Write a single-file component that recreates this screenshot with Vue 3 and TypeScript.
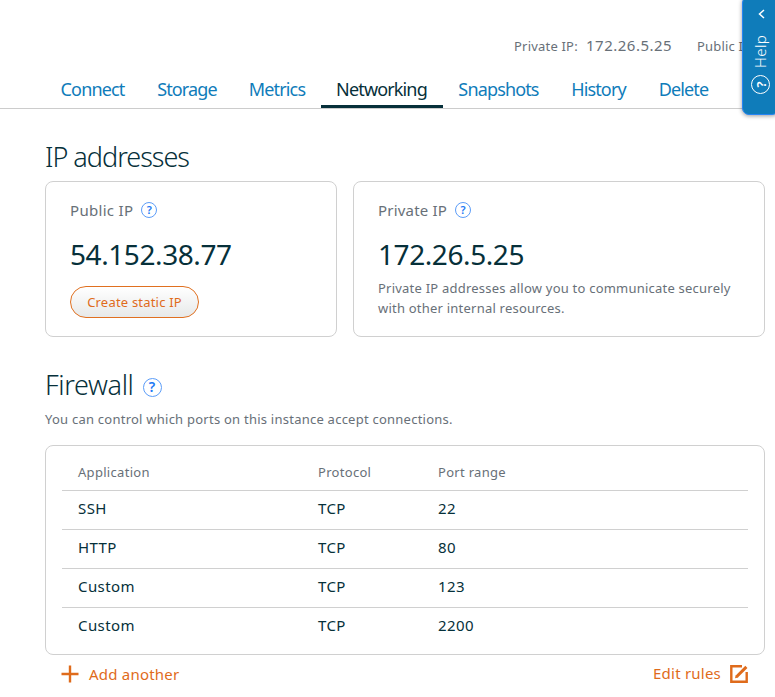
<script setup lang="ts">
interface Tab { id: string; label: string }
interface Rule { application: string; protocol: string; port: string }

const tabs: Tab[] = [
  { id: 'connect', label: 'Connect' },
  { id: 'storage', label: 'Storage' },
  { id: 'metrics', label: 'Metrics' },
  { id: 'networking', label: 'Networking' },
  { id: 'snapshots', label: 'Snapshots' },
  { id: 'history', label: 'History' },
  { id: 'delete', label: 'Delete' },
]
const activeTab = 'networking'

const rules: Rule[] = [
  { application: 'SSH', protocol: 'TCP', port: '22' },
  { application: 'HTTP', protocol: 'TCP', port: '80' },
  { application: 'Custom', protocol: 'TCP', port: '123' },
  { application: 'Custom', protocol: 'TCP', port: '2200' },
]
</script>

<template>
  <div class="page">
    <header class="meta">
      <span class="meta-label">Private IP:</span>
      <span class="meta-value">172.26.5.25</span>
      <span class="meta-label">Public IP:</span>
    </header>

    <nav class="tabs">
      <a v-for="tab in tabs" :key="tab.id" class="tab" :class="{ active: tab.id === activeTab }">
        <span>{{ tab.label }}</span>
      </a>
    </nav>

    <main class="content">
      <h2 class="title ip-title"><span>IP addresses</span></h2>
      <div class="cards">
        <section class="card">
          <div class="card-label public"><span>Public IP</span><i class="help-icon">?</i></div>
          <div class="address">54.152.38.77</div>
          <button class="static-button"><span>Create static IP</span></button>
        </section>
        <section class="card">
          <div class="card-label"><span>Private IP</span><i class="help-icon">?</i></div>
          <div class="address">172.26.5.25</div>
          <p class="note">Private IP addresses allow you to communicate securely<br>with other internal resources.</p>
        </section>
      </div>

      <h2 class="title firewall-title"><span>Firewall</span><i class="help-icon large">?</i></h2>
      <p class="subtitle">You can control which ports on this instance accept connections.</p>

      <div class="rules">
        <div class="row head"><span>Application</span><span>Protocol</span><span>Port range</span></div>
        <div v-for="(rule, index) in rules" :key="index" class="row">
          <span>{{ rule.application }}</span><span>{{ rule.protocol }}</span><span>{{ rule.port }}</span>
        </div>
      </div>

      <div class="actions">
        <a class="action">
          <svg width="18" height="18" viewBox="0 0 18 18"><path d="M9 .5v17M.5 9h17" stroke="currentColor" stroke-width="2.4" fill="none" /></svg>
          <span>Add another</span>
        </a>
        <a class="action edit">
          <span>Edit rules</span>
          <svg width="18" height="18" viewBox="0 0 18 18" fill="none" stroke="currentColor">
            <path d="M12 1.3H1.3v15.4h15.4V7" stroke-width="2.4" />
            <path d="M6.8 11.5L16.4 1.9" stroke-width="3" />
            <path d="M5 13.3l.7-3.4 2.7 2.7z" fill="currentColor" stroke="none" />
          </svg>
        </a>
      </div>
    </main>

    <aside class="help-panel">
      <svg class="chevron" width="7" height="10" viewBox="0 0 7 10"><path d="M6 1L1.5 5 6 9" fill="none" stroke="#fff" stroke-width="1.5" /></svg>
      <span class="help-text">Help</span>
      <i class="help-icon inverse">?</i>
    </aside>
  </div>
</template>

<style>
body { background: #fff; overflow: hidden; }
</style>

<style scoped>
* { box-sizing: border-box; }
.page {
  position: relative;
  width: 775px;
  height: 697px;
  overflow: hidden;
  background: #fff;
  color: #06303a;
  font-family: "Noto Sans", "Open Sans", sans-serif;
}
h2, p { margin: 0; font-weight: 400; }
.meta {
  display: flex;
  align-items: baseline;
  height: 72px;
  padding: 33px 0 0 514px;
  color: #687078;
  white-space: nowrap;
  line-height: 24px;
}
.meta-label { font-size: 13px; letter-spacing: 0.2px; width: 72px; }
.meta-value { font-size: 15px; letter-spacing: 0.5px; width: 111px; }
.tabs {
  display: grid;
  grid-template-columns: 96px 93px 87px 122px 112px 88px 82px;
  height: 37px;
  padding-left: 45px;
  border-bottom: 1px solid #ccc;
}
.tab {
  display: flex;
  justify-content: center;
  height: 36px;
  padding-right: 1px;
  line-height: 34px;
  color: #0f7cba;
  font-size: 18px;
  letter-spacing: -0.85px;
  white-space: nowrap;
}
.tab.active { color: #06303a; border-bottom: 3px solid #06303a; }
.content { padding: 0 10px 0 45px; }
.title { display: flex; align-items: center; color: #06303a; font-size: 27px; font-weight: 300; line-height: 40px; white-space: nowrap; }
.ip-title { height: 72px; padding-top: 24px; letter-spacing: -1px; }
.cards { display: grid; grid-template-columns: 292px 412px; gap: 16px; height: 156px; }
.card { padding: 16px 24px 0; border: 1px solid #d0d0d0; border-radius: 8px; white-space: nowrap; }
.card-label { display: flex; align-items: center; gap: 8px; height: 24px; color: #687078; font-size: 15px; line-height: 24px; letter-spacing: 0.2px; }
.card-label.public { letter-spacing: 0.3px; }
.help-icon {
  display: flex;
  align-items: center;
  justify-content: center;
  width: 16px;
  height: 16px;
  border: 1px solid #5c9df8;
  border-radius: 50%;
  color: #2077f4;
  font-size: 11px;
  font-style: normal;
  font-weight: 600;
  line-height: 14px;
  letter-spacing: 0;
}
.help-icon.large { width: 19px; height: 19px; margin: 4px 0 0 9px; font-size: 14px; }
.address { height: 64px; padding-top: 12px; font-size: 28px; line-height: 40px; letter-spacing: -0.42px; }
.static-button {
  display: flex;
  align-items: center;
  justify-content: center;
  width: 129px;
  height: 32px;
  padding: 0;
  border: 1px solid #e07020;
  border-radius: 16px;
  background: linear-gradient(#fff, #e7e9e9);
  color: #df6b1b;
  font-family: inherit;
  font-size: 13px;
  letter-spacing: 0.2px;
}
.note { margin-top: -8px; color: #687078; font-size: 13px; line-height: 20px; letter-spacing: 0.22px; }
.firewall-title { height: 68px; padding-top: 28px; letter-spacing: -0.35px; }
.subtitle { height: 40px; padding-top: 4px; color: #687078; font-size: 13px; line-height: 21px; letter-spacing: 0.24px; white-space: nowrap; }
.rules { height: 210px; padding: 9px 16px 0; border: 1px solid #d0d0d0; border-radius: 8px; }
.row { display: grid; grid-template-columns: 240px 120px 1fr; height: 39px; padding-left: 16px; border-bottom: 1px solid #d0d0d0; font-size: 15px; line-height: 34px; letter-spacing: 0.4px; }
.row.head { height: 36px; color: #687078; font-size: 13px; line-height: 35px; letter-spacing: 0.3px; }
.row:last-child { border-bottom: 0; }
.actions { display: flex; justify-content: space-between; height: 38px; padding: 0 17px 0 16px; color: #df6b1b; font-size: 15px; letter-spacing: 0.22px; }
.action { display: flex; align-items: center; gap: 10px; height: 38px; }
.action.edit { gap: 9px; }
.edit span { margin-top: -2px; }
.help-panel {
  position: absolute;
  top: -4px;
  right: -4px;
  display: flex;
  flex-direction: column;
  align-items: center;
  width: 37px;
  height: 119px;
  border: 1px solid #2585f5;
  border-radius: 7px;
  background: #0f7cba;
  box-shadow: 0 1px 4px rgba(0, 0, 0, 0.4);
  color: #fff;
}
.chevron { margin: 12px 0 0 2px; }
.help-text { height: 38px; margin: 11px 2px 0 0; writing-mode: vertical-rl; transform: rotate(180deg); font-size: 15px; font-weight: 300; line-height: 20px; letter-spacing: 0.4px; }
.help-icon.inverse { width: 19px; height: 19px; margin-top: 7px; border-color: #fff; color: #fff; font-size: 13px; transform: rotate(-90deg); }
</style>
